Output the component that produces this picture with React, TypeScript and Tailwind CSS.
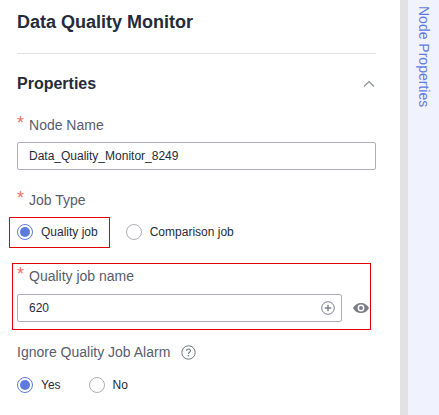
import React from "react";

function Label({ children, req = true }: { children: React.ReactNode; req?: boolean }) {
  return (
    <div className="flex h-[20px] items-center text-[14px] text-[#575d6c]">
      {req && <span className="mr-[5px] text-[#f66f6a] text-[18px] leading-[20px] relative top-[-2px]">*</span>}
      <span>{children}</span>
    </div>
  );
}

function Radio({ checked, label }: { checked?: boolean; label: string }) {
  return (
    <div className="flex items-center">
      <span
        className={
          "flex h-[16px] w-[16px] items-center justify-center rounded-full border bg-white " +
          (checked ? "border-[#5e7ce0]" : "border-[#adb0b8]")
        }
      >
        {checked && <span className="h-[10px] w-[10px] rounded-full bg-[#5e7ce0]" />}
      </span>
      <span className="ml-[8px] text-[12px] text-[#252b3a]">{label}</span>
    </div>
  );
}

export default function App() {
  return (
    <div className="flex h-[415px] w-[439px] overflow-hidden bg-white font-['Liberation_Sans',Arial,sans-serif]">
      <div className="w-[400px] shrink-0 pl-[17px] pr-[24px]">
        <div className="flex h-[54px] items-start border-b border-[#dfe1e6] pt-[12px]">
          <h1 className="text-[18px] font-bold leading-[20px] text-[#252b3a]">Data Quality Monitor</h1>
        </div>
        <div className="mt-[21px] flex h-[18px] items-center justify-between">
          <h2 className="text-[16px] font-bold leading-[18px] text-[#252b3a]">Properties</h2>
          <svg width="12" height="8" viewBox="0 0 12 8" fill="none" className="mr-[1px]">
            <path d="M1 6.5 L6 1.5 L11 6.5" stroke="#8a8e99" strokeWidth="1.2" />
          </svg>
        </div>
        <div className="mt-[22px]">
          <Label>Node Name</Label>
          <div className="mt-[7px] flex h-[28px] w-[359px] items-center rounded-[2px] border border-[#adb0b8] px-[11px] text-[12px] text-[#252b3a]">
            Data_Quality_Monitor_8249
          </div>
        </div>
        <div className="mt-[20px]">
          <Label>Job Type</Label>
          <div className="relative mt-[7px] flex h-[30px] items-center">
            <div className="absolute left-[-8px] top-0 h-[31px] w-[101px] border border-[#e00000]" />
            <Radio checked label="Quality job" />
            <div className="ml-[28px]">
              <Radio label="Comparison job" />
            </div>
          </div>
        </div>
        <div className="relative mt-[16px] ml-[-5px] h-[67px] w-[359px] border border-[#e00000] pl-[4px] pt-[2px] pb-[2px]">
          <Label>Quality job name</Label>
          <div className="mt-[8px] flex items-center">
            <div className="flex h-[28px] w-[325px] items-center justify-between rounded-[2px] border border-[#adb0b8] pl-[11px] pr-[6px] text-[12px] text-[#252b3a]">
              <span>620</span>
              <svg width="14" height="14" viewBox="0 0 14 14" fill="none">
                <circle cx="7" cy="7" r="6.3" stroke="#7a7e88" strokeWidth="1" />
                <path d="M7 3.8V10.200M3.800 7H10.200" stroke="#7a7e88" strokeWidth="1.400" />
              </svg>
            </div>
            <svg width="16" height="10" viewBox="0 0 16 10" className="ml-[11px]">
              <path fillRule="evenodd" d="M8 0C4.4 0 1.4 2 0 5c1.4 3 4.4 5 8 5s6.600-2 8-5C14.600 2 11.600 0 8 0Zm0 1.600a3.400 3.400 0 1 1 0 6.800 3.400 3.400 0 0 1 0-6.800Z" fill="#7a7e88" />
              <circle cx="8" cy="5" r="2" fill="#7a7e88" />
            </svg>
          </div>
        </div>
        <div className="mt-[12px]">
          <div className="flex h-[20px] items-center text-[14px] text-[#575d6c]">
            <span>Ignore Quality Job Alarm</span>
            <svg width="15" height="15" viewBox="0 0 15 15" fill="none" className="ml-[11px]">
              <circle cx="7.5" cy="7.500" r="6.700" stroke="#71757f" strokeWidth="1" />
              <path d="M5.500 5.800C5.500 4.700 6.400 4 7.500 4s2 .7 2 1.800c0 1.500-2 1.500-2 3.100" stroke="#71757f" strokeWidth="1.100" />
              <circle cx="7.500" cy="10.800" r=".8" fill="#71757f" />
            </svg>
          </div>
          <div className="mt-[14px] flex items-center">
            <Radio checked label="Yes" />
            <div className="ml-[28px]">
              <Radio label="No" />
            </div>
          </div>
        </div>
      </div>
      <div className="w-[8px] shrink-0 bg-[#e2e2e2]" />
      <div className="flex-1 bg-[#f0f3fd] pt-[6px]">
        <div className="text-[14px] leading-[31px] text-[#5e7ce0] [writing-mode:vertical-rl] whitespace-nowrap">
          Node Properties
        </div>
      </div>
    </div>
  );
}
